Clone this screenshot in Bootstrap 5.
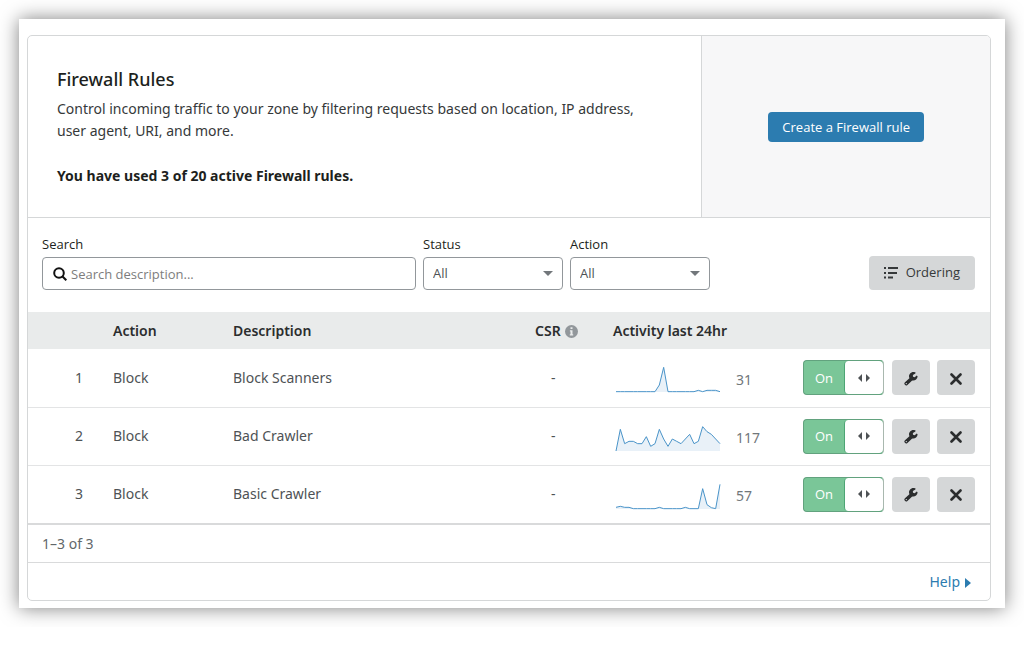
<!DOCTYPE html>
<html lang="en">
<head>
<meta charset="utf-8">
<meta name="viewport" content="width=device-width, initial-scale=1">
<title>Firewall Rules</title>
<link href="https://cdn.jsdelivr.net/npm/bootstrap@5.3.0/dist/css/bootstrap.min.css" rel="stylesheet">
<style>
  body { font-family: "Noto Sans", "Open Sans", sans-serif; font-size: 14px; line-height: 22px; color: #36393a; background: #fff; }
  .sheet { margin: 19px; padding: 16px 14px 7px 8px; background: #fff; box-shadow: 0 0 18px rgba(0,0,0,.5); }
  .panel { border: 1px solid #d5d7d8; border-radius: 5px; overflow: hidden; }
  .intro { flex: 0 0 70%; padding: 31px 30px 30px 29px; }
  .intro h1 { font-size: 18px; line-height: 24px; font-weight: 500; color: #1d1f20; margin-bottom: 7px; }
  .intro p { max-width: 600px; margin-bottom: 23px; }
  .intro strong { color: #1d1f20; }
  .side { background: #f7f7f8; border-left: 1px solid #d5d7d8; }
  .create-btn, .filters, .filters .field, .gray-btn, .switch-btn { font-family: "Open Sans", "Noto Sans", sans-serif; font-size: 13px; }
  .create-btn { background: #2c7cb0; color: #fff; line-height: 20px; padding: 5px 14px; border: 0; border-radius: 4px; }
  .create-btn:hover { background: #23638d; color: #fff; }
  .filters { padding: 16px 15px 22px 14px; border-top: 1px solid #d5d7d8; gap: 7px; }
  .filters label { line-height: 20px; margin-bottom: 3px; display: block; color: #1d1f20; }
  .field { height: 33px; border: 1px solid #92979b; border-radius: 4px; color: #4e5255; background-color: #fff; }
  .search-col { flex: 0 1 374px; }
  .pick-col { flex: 0 0 140px; }
  .search-box { padding: 0 10px; gap: 4px; }
  .search-box input { border: 0; outline: 0; min-width: 0; color: inherit; }
  .search-box input::placeholder { color: #7d7d7d; opacity: 1; }
  .form-select.field { padding: 0 30px 0 9px; background-image: url("data:image/svg+xml,%3Csvg xmlns='http://www.w3.org/2000/svg' viewBox='0 0 10 5'%3E%3Cpath d='M0 0h10L5 5z' fill='%2372777b'/%3E%3C/svg%3E"); background-size: 10px 5px; background-position: right 9px center; }
  .gray-btn { background: #d5d7d8; border: 0; border-radius: 4px; color: #36393a; height: 34px; }
  .order-btn { padding: 0 15px; gap: 8px; }
  .rules { table-layout: fixed; margin: 0; --bs-table-bg: transparent; }
  .rules th { background: #e9ebeb; border: 0; padding: 8px 0 7px 15px; font-weight: 600; color: #2b2d2e; }
  .rules td { padding: 11px 0 11px 15px; border-bottom: 1px solid #e3e4e5; color: #4e5255; vertical-align: middle; height: 58px; }
  .rules tbody tr:last-child td { border-bottom: 0; }
  .rules .num { text-align: right; padding: 11px 15px 11px 0; }
  .c-num { width: 70px; } .c-act { width: 120px; } .c-csr { width: 78px; } .c-log { width: 190px; } .c-ops { width: 202px; }
  .spark { width: 104px; height: 25px; margin-left: 3px; overflow: visible; }
  .spark .area { fill: #e9f1f8; }
  .spark .line { fill: none; stroke: #4a94c9; stroke-width: 1; vector-effect: non-scaling-stroke; }
  .count { color: #72777b; }
  .rules td.ops { padding-right: 15px; }
  .switch-btn { width: 81px; height: 35px; padding: 0; border: 1px solid #62a27e; border-right-color: #a9b8af; border-radius: 4px; background: #7ac698; color: #fff; overflow: hidden; }
  .switch-btn .state { flex: 1; }
  .switch-btn .knob { width: 39px; background: #fff; border-left: 1px solid #4da574; border-radius: 4px; }
  .tool-btn { width: 38px; height: 35px; padding: 0; }
  .tally { border-top: 2px solid #d9dadb; padding: 8px 14px 7px; color: #62676a; }
  .foot { border-top: 1px solid #d9dadb; padding: 8px 19px 7px; }
  .foot a { color: #2c7cb0; text-decoration: none; }
</style>
</head>
<body>
<main class="sheet">
  <section class="panel">
    <div class="d-flex">
      <div class="intro">
        <h1>Firewall Rules</h1>
        <p>Control incoming traffic to your zone by filtering requests based on location, IP address, user agent, URI, and more.</p>
        <strong>You have used 3 of 20 active Firewall rules.</strong>
      </div>
      <div class="side flex-fill d-flex align-items-center justify-content-center">
        <button type="button" class="btn create-btn">Create a Firewall rule</button>
      </div>
    </div>

    <form class="filters d-flex align-items-end">
      <div class="search-col">
        <label for="search">Search</label>
        <div class="field search-box d-flex align-items-center">
          <svg width="14" height="14" viewBox="0 0 14 14" fill="none" stroke="#111" stroke-width="2"><circle cx="6" cy="6" r="4.8"/><path d="M9.3 9.3l4 4"/></svg>
          <input id="search" type="text" class="flex-fill p-0" placeholder="Search description...">
        </div>
      </div>
      <div class="pick-col">
        <label for="status">Status</label>
        <select id="status" class="form-select field"><option>All</option></select>
      </div>
      <div class="pick-col">
        <label for="action">Action</label>
        <select id="action" class="form-select field"><option>All</option></select>
      </div>
      <button type="button" class="btn gray-btn order-btn ms-auto d-flex align-items-center">
        <svg width="14" height="12" viewBox="0 0 14 12" fill="#36393a"><path d="M0 0h2v2H0zM4 0h10v2H4zM0 5h2v2H0zM4 5h9v2H4zM0 9.500h2v2H0zM4 9.500h5v2H4z"/></svg>
        Ordering
      </button>
    </form>

    <table class="table rules">
      <colgroup><col class="c-num"><col class="c-act"><col><col class="c-csr"><col class="c-log"><col class="c-ops"></colgroup>
      <thead>
        <tr>
          <th></th><th scope="col">Action</th><th scope="col">Description</th>
          <th scope="col"><span class="d-flex align-items-center gap-1">CSR
            <svg width="13" height="13" viewBox="0 0 13 13"><circle cx="6.5" cy="6.5" r="6.5" fill="#92979b"/><path d="M5.5 2.3h2v1.8h-2zM4.9 5.2h2.6v4h.7v1.3H4.8V9.2h.7V6.5h-.6z" fill="#e9ebeb"/></svg></span></th>
          <th scope="col">Activity last 24hr</th><th></th>
        </tr>
      </thead>
      <tbody id="rows"></tbody>
    </table>

    <div class="tally">1–3 of 3</div>
    <div class="foot text-end"><a href="#help">Help<svg class="ms-1" width="7" height="10" viewBox="0 0 7 10"><path d="M1 0l6 5-6 5z" fill="#2c7cb0"/></svg></a></div>
  </section>
</main>

<script>
  // Sparkline samples: 25 readings each, 0 (top) to 75 (baseline)
  const rules = [
    ["Block", "Block Scanners", 31, [74,74,74,74,74,74,74,74,74,74,54,1,74,74,74,74,74,74,74,70,74,70,70,70,74]],
    ["Block", "Bad Crawler", 117, [75,10,53,46,46,53,53,32,61,53,10,39,61,39,46,53,39,25,53,46,2,17,25,39,53]],
    ["Block", "Basic Crawler", 57, [70,67,70,70,74,74,74,74,74,74,70,74,74,74,74,74,70,74,74,74,14,62,71,74,1]]
  ];
  document.getElementById("rows").innerHTML = rules.map(([action, name, hits, data], i) => {
    const pts = data.map((y, x) => x + "," + y).join(" ");
    return `<tr>
      <td class="num">${i + 1}</td><td>${action}</td><td>${name}</td><td><span class="ps-3">-</span></td>
      <td><div class="d-flex align-items-center gap-3 pt-1">
        <svg class="spark" viewBox="0 0 24 75" preserveAspectRatio="none"><polygon class="area" points="0,75 ${pts} 24,75"/><polyline class="line" points="${pts}"/></svg>
        <span class="count">${hits}</span></div></td>
      <td class="ops"><div class="d-flex justify-content-between">
        <button type="button" class="switch-btn d-flex align-items-stretch" role="switch" aria-checked="true" aria-label="${name} enabled">
          <span class="state align-self-center">On</span>
          <span class="knob d-flex align-items-center justify-content-center"><svg width="12" height="8" viewBox="0 0 12 8" fill="#4e5255"><path d="M4 0v8L0 4zM8 0v8l4-4z"/></svg></span>
        </button>
        <button type="button" class="btn gray-btn tool-btn" aria-label="Edit"><svg width="14" height="14" viewBox="0 0 14 14"><path d="M2.200 11.600L8 6.200" stroke="#2b2d2e" stroke-width="3.600" stroke-linecap="round"/><path d="M11.600.6A4.300 4.300 0 1 0 13.600 4.200L12.700 3.600 10.700 5.200 8.900 4.800 8.900 2.900 11.400 1.400z" fill="#2b2d2e"/><circle cx="2.300" cy="11.600" r=".7" fill="#d5d7d8"/></svg></button>
        <button type="button" class="btn gray-btn tool-btn" aria-label="Delete"><svg width="12" height="12" viewBox="0 0 12 12"><path d="M1.500 1.500l9 9M10.500 1.500l-9 9" stroke="#2b2d2e" stroke-width="2.600" stroke-linecap="round"/></svg></button>
      </div></td></tr>`;
  }).join("");
</script>
<script src="https://cdn.jsdelivr.net/npm/bootstrap@5.3.0/dist/js/bootstrap.bundle.min.js"></script>
</body>
</html>
